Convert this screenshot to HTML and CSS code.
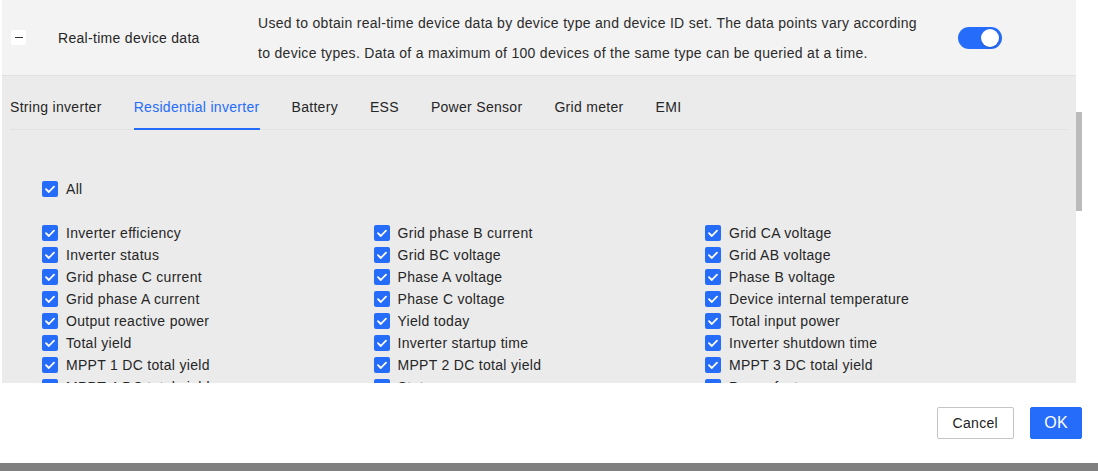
FILE: index.html
```html
<!doctype html>
<html>
  <head>
    <title>Real-time device data</title>
    <meta http-equiv="Content-Type" content="text/html; charset=utf-8" />
    <link rel="stylesheet" href="styles.css">
  </head>
  <body>
    <div id="page">
      <div id="panel">
        <div class="header">
          <span class="collapse"><span class="minus"></span></span>
          <div class="title">Real-time device data</div>
          <div class="desc">
            Used to obtain real-time device data by device type and device ID set. The data points vary according
            to device types. Data of a maximum of 100 devices of the same type can be queried at a time.
          </div>
          <span class="toggle on"><span class="knob"></span></span>
        </div>

        <div class="tabs">
          <a class="tab">String inverter</a>
          <a class="tab active">Residential inverter</a>
          <a class="tab">Battery</a>
          <a class="tab">ESS</a>
          <a class="tab">Power Sensor</a>
          <a class="tab">Grid meter</a>
          <a class="tab">EMI</a>
        </div>

        <div class="points">
          <label class="check all"><span class="box"><svg viewBox="0 0 16 16"><polyline points="4,8.2 6.8,11 12,5.6" /></svg></span>All</label>

          <div class="grid">
            <label class="check"><span class="box"><svg viewBox="0 0 16 16"><polyline points="4,8.2 6.8,11 12,5.6" /></svg></span>Inverter efficiency</label>
            <label class="check"><span class="box"><svg viewBox="0 0 16 16"><polyline points="4,8.2 6.8,11 12,5.6" /></svg></span>Grid phase B current</label>
            <label class="check"><span class="box"><svg viewBox="0 0 16 16"><polyline points="4,8.2 6.8,11 12,5.6" /></svg></span>Grid CA voltage</label>

            <label class="check"><span class="box"><svg viewBox="0 0 16 16"><polyline points="4,8.2 6.8,11 12,5.6" /></svg></span>Inverter status</label>
            <label class="check"><span class="box"><svg viewBox="0 0 16 16"><polyline points="4,8.2 6.8,11 12,5.6" /></svg></span>Grid BC voltage</label>
            <label class="check"><span class="box"><svg viewBox="0 0 16 16"><polyline points="4,8.2 6.8,11 12,5.6" /></svg></span>Grid AB voltage</label>

            <label class="check"><span class="box"><svg viewBox="0 0 16 16"><polyline points="4,8.2 6.8,11 12,5.6" /></svg></span>Grid phase C current</label>
            <label class="check"><span class="box"><svg viewBox="0 0 16 16"><polyline points="4,8.2 6.8,11 12,5.6" /></svg></span>Phase A voltage</label>
            <label class="check"><span class="box"><svg viewBox="0 0 16 16"><polyline points="4,8.2 6.8,11 12,5.6" /></svg></span>Phase B voltage</label>

            <label class="check"><span class="box"><svg viewBox="0 0 16 16"><polyline points="4,8.2 6.8,11 12,5.6" /></svg></span>Grid phase A current</label>
            <label class="check"><span class="box"><svg viewBox="0 0 16 16"><polyline points="4,8.2 6.8,11 12,5.6" /></svg></span>Phase C voltage</label>
            <label class="check"><span class="box"><svg viewBox="0 0 16 16"><polyline points="4,8.2 6.8,11 12,5.6" /></svg></span>Device internal temperature</label>

            <label class="check"><span class="box"><svg viewBox="0 0 16 16"><polyline points="4,8.2 6.8,11 12,5.6" /></svg></span>Output reactive power</label>
            <label class="check"><span class="box"><svg viewBox="0 0 16 16"><polyline points="4,8.2 6.8,11 12,5.6" /></svg></span>Yield today</label>
            <label class="check"><span class="box"><svg viewBox="0 0 16 16"><polyline points="4,8.2 6.8,11 12,5.6" /></svg></span>Total input power</label>

            <label class="check"><span class="box"><svg viewBox="0 0 16 16"><polyline points="4,8.2 6.8,11 12,5.6" /></svg></span>Total yield</label>
            <label class="check"><span class="box"><svg viewBox="0 0 16 16"><polyline points="4,8.2 6.8,11 12,5.6" /></svg></span>Inverter startup time</label>
            <label class="check"><span class="box"><svg viewBox="0 0 16 16"><polyline points="4,8.2 6.8,11 12,5.6" /></svg></span>Inverter shutdown time</label>

            <label class="check"><span class="box"><svg viewBox="0 0 16 16"><polyline points="4,8.2 6.8,11 12,5.6" /></svg></span>MPPT 1 DC total yield</label>
            <label class="check"><span class="box"><svg viewBox="0 0 16 16"><polyline points="4,8.2 6.8,11 12,5.6" /></svg></span>MPPT 2 DC total yield</label>
            <label class="check"><span class="box"><svg viewBox="0 0 16 16"><polyline points="4,8.2 6.8,11 12,5.6" /></svg></span>MPPT 3 DC total yield</label>

            <label class="check"><span class="box"><svg viewBox="0 0 16 16"><polyline points="4,8.2 6.8,11 12,5.6" /></svg></span>MPPT 4 DC total yield</label>
            <label class="check"><span class="box"><svg viewBox="0 0 16 16"><polyline points="4,8.2 6.8,11 12,5.6" /></svg></span>Status</label>
            <label class="check"><span class="box"><svg viewBox="0 0 16 16"><polyline points="4,8.2 6.8,11 12,5.6" /></svg></span>Power factor</label>
          </div>
        </div>
      </div>
      <div class="thumb"></div>

      <div class="footer">
        <button class="btn">Cancel</button>
        <button class="btn primary">OK</button>
      </div>
      <div class="bottombar"></div>
    </div>
  </body>
</html>
```

FILE: styles.css
```css
* {
  margin: 0px;
  padding: 0px;
  box-sizing: border-box;
}
body {
  background-color: #ffffff;
  font-family: "Liberation Sans", Arial, sans-serif;
  font-size: 14px;
  letter-spacing: 0.3px;
  color: #262626;
}
#page {
  position: relative;
  width: 1098px;
  height: 471px;
  overflow: hidden;
}
#panel {
  margin-left: 2px;
  width: 1074px;
  height: 383px;
  background-color: #ebebeb;
  overflow: hidden;
}
.header {
  display: flex;
  align-items: center;
  height: 76px;
  padding-left: 9px;
  background-color: #f3f3f3;
  border-bottom: 1px solid #e0e0e0;
}
.collapse {
  display: flex;
  align-items: center;
  justify-content: center;
  width: 15px;
  height: 15px;
  background-color: #fff;
  border-radius: 2px;
}
.minus {
  width: 8px;
  height: 1px;
  background-color: #333;
}
.title {
  width: 200px;
  margin-left: 32px;
  font-size: 14px;
}
.desc {
  width: 666px;
  font-size: 14px;
  letter-spacing: 0.3px;
  line-height: 30px;
  color: #2b2b2b;
}
.toggle {
  position: relative;
  width: 44px;
  height: 22px;
  margin-left: 34px;
  border-radius: 11px;
  background-color: #266cfb;
}
.knob {
  position: absolute;
  top: 2px;
  right: 3px;
  width: 18px;
  height: 18px;
  border-radius: 50%;
  background-color: #fff;
  box-shadow: 0 1px 2px rgba(0, 0, 0, 0.2);
}
.tabs {
  display: flex;
  gap: 32px;
  margin: 0 8px;
  padding-top: 20px;
  border-bottom: 1px solid #e2e2e2;
}
.tab {
  line-height: 22px;
  padding-bottom: 10px;
  margin-bottom: -1px;
  border-bottom: 2px solid transparent;
  color: #262626;
  cursor: pointer;
}
.tab.active {
  color: #266cfb;
  border-bottom-color: #266cfb;
}
.points {
  padding: 48px 0 0 40px;
}
.check {
  display: flex;
  align-items: center;
  gap: 8px;
  height: 22px;
  white-space: nowrap;
}
.check.all {
  margin-bottom: 22px;
}
.box {
  display: flex;
  width: 16px;
  height: 16px;
  border-radius: 2px;
  background-color: #266cfb;
}
.box svg {
  width: 16px;
  height: 16px;
  fill: none;
  stroke: #fff;
  stroke-width: 1.8;
  stroke-linecap: round;
  stroke-linejoin: round;
}
.grid {
  display: grid;
  grid-template-columns: repeat(3, 331.5px);
}
.thumb {
  position: absolute;
  left: 1076px;
  top: 112px;
  width: 6px;
  height: 99px;
  background-color: #bbbbbb;
}
.footer {
  display: flex;
  justify-content: flex-end;
  align-items: center;
  gap: 16px;
  height: 80px;
  padding-right: 16px;
}
.btn {
  height: 32px;
  padding: 0 15px;
  font-family: inherit;
  font-size: 14px;
  letter-spacing: 0.3px;
  color: #222;
  background-color: #fff;
  border: 1px solid #c4c4c4;
  border-radius: 2px;
  cursor: pointer;
}
.btn.primary {
  width: 52px;
  padding: 0;
  font-size: 16px;
  color: #fff;
  background-color: #266cfb;
  border-color: #266cfb;
}
.bottombar {
  height: 8px;
  background-color: #808080;
}
```
